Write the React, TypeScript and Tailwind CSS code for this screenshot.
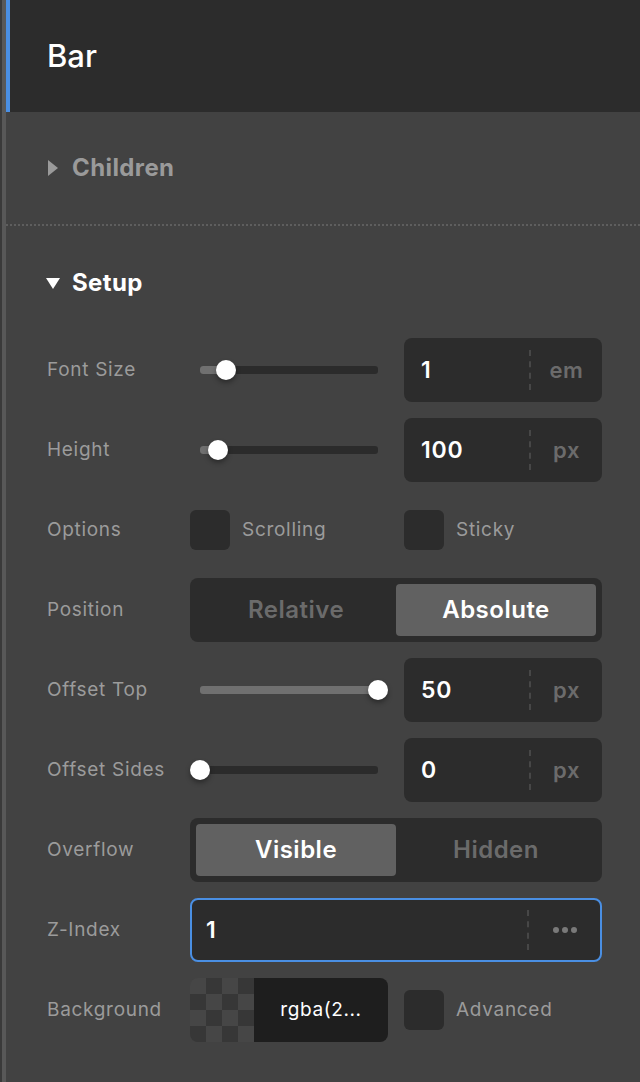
import React from 'react';

const font = { fontFamily: 'Inter, "Noto Sans", sans-serif' };

function Slider({ value }: { value: number }) {
  return (
    <div className="relative h-5 w-[198px]">
      <div className="absolute left-[10px] right-[10px] top-[6px] h-2 overflow-hidden rounded-[3px] bg-[#2b2b2b]">
        <div className="h-full bg-[#707070]" style={{ width: `${value * 100}%` }} />
      </div>
      <div
        className="absolute top-0 h-5 w-5 rounded-full bg-white shadow-[0_3px_5px_rgba(0,0,0,0.35)]"
        style={{ left: `${value * 178}px` }}
      />
    </div>
  );
}

function NumberInput({ value, unit }: { value: string; unit: string }) {
  return (
    <div className="flex h-16 w-[198px] items-center rounded-lg bg-[#2c2c2c]">
      <span className="flex-1 pl-[17px] text-[23px] font-semibold tracking-[0.8px] text-white">{value}</span>
      <div className="h-10 border-l-2 border-dashed border-[#474747]" />
      <span className="w-[71px] text-center text-[22px] font-semibold tracking-[0.5px] text-[#6b6b6b]">{unit}</span>
    </div>
  );
}

function Checkbox({ label }: { label: string }) {
  return (
    <div className="flex items-center gap-3">
      <div className="h-10 w-10 rounded-md bg-[#2c2c2c]" />
      <span className="text-[19px] tracking-[0.7px] text-[#9b9b9b]">{label}</span>
    </div>
  );
}

function Segmented({ options, active }: { options: string[]; active: number }) {
  return (
    <div className="grid h-16 w-[412px] grid-cols-2 rounded-lg bg-[#2c2c2c] p-[6px]">
      {options.map((o, i) => (
        <div
          key={o}
          className={
            i === active
              ? 'flex items-center justify-center rounded bg-[#616161] text-[24px] font-semibold tracking-[0.5px] text-white'
              : 'flex items-center justify-center text-[24px] font-semibold tracking-[0.5px] text-[#6b6b6b]'
          }
        >
          {o}
        </div>
      ))}
    </div>
  );
}

function Row({ label, children }: { label: string; children: React.ReactNode }) {
  return (
    <div className="flex h-20 items-center">
      <span className="w-[143px] text-[19px] tracking-[0.7px] text-[#9b9b9b]">{label}</span>
      <div className="flex items-center gap-4">{children}</div>
    </div>
  );
}

const checker = [0, 1, 2, 3].flatMap((r) => [0, 1, 2, 3].map((c) => (r + c) % 2 === 0));

export default function App() {
  return (
    <div className="flex min-h-[1082px] w-[640px] bg-[#424242]" style={font}>
      <div className="w-[2px] bg-[#3a3a3a]" />
      <div className="w-1 bg-[#585858]" />
      <div className="flex-1">
        <div className="flex h-[112px] items-center border-l-4 border-[#4a8fe3] bg-[#2c2c2c] pl-[37px]">
          <span className="text-[31px] font-medium text-white">Bar</span>
        </div>

        <div className="flex h-[112px] items-center gap-[14px] pl-[42px]">
          <svg width="10" height="16" viewBox="0 0 10 16">
            <path d="M0 0 L10 8 L0 16 Z" fill="#9a9a9a" />
          </svg>
          <span className="text-[24px] font-bold tracking-[0.4px] text-[#9a9a9a]">Children</span>
        </div>
        <div className="border-t-2 border-dotted border-[#5e5e5e]" />

        <div className="mt-[40px] flex h-[34px] items-center gap-[12px] pl-[40px]">
          <svg width="14" height="11" viewBox="0 0 14 11">
            <path d="M0 0 L14 0 L7 11 Z" fill="#ffffff" />
          </svg>
          <span className="text-[24px] font-bold tracking-[0.4px] text-white">Setup</span>
        </div>

        <div className="mt-[30px] pl-[41px]">
          <Row label="Font Size">
            <Slider value={0.144} />
            <NumberInput value="1" unit="em" />
          </Row>
          <Row label="Height">
            <Slider value={0.1} />
            <NumberInput value="100" unit="px" />
          </Row>
          <Row label="Options">
            <div className="grid grid-cols-[198px_198px] gap-4">
              <Checkbox label="Scrolling" />
              <Checkbox label="Sticky" />
            </div>
          </Row>
          <Row label="Position">
            <Segmented options={['Relative', 'Absolute']} active={1} />
          </Row>
          <Row label="Offset Top">
            <Slider value={1} />
            <NumberInput value="50" unit="px" />
          </Row>
          <Row label="Offset Sides">
            <Slider value={0} />
            <NumberInput value="0" unit="px" />
          </Row>
          <Row label="Overflow">
            <Segmented options={['Visible', 'Hidden']} active={0} />
          </Row>
          <Row label="Z-Index">
            <div className="flex h-16 w-[412px] items-center rounded-lg border-2 border-[#4a8fe3] bg-[#2c2c2c]">
              <span className="flex-1 pl-[14px] text-[23px] font-semibold text-white">1</span>
              <div className="h-10 border-l-2 border-dashed border-[#474747]" />
              <div className="flex w-[71px] items-center justify-center gap-[3px]">
                <span className="h-[6px] w-[6px] rounded-full bg-[#7a7a7a]" />
                <span className="h-[6px] w-[6px] rounded-full bg-[#7a7a7a]" />
                <span className="h-[6px] w-[6px] rounded-full bg-[#7a7a7a]" />
              </div>
            </div>
          </Row>
          <Row label="Background">
            <div className="flex h-16 w-[198px] overflow-hidden rounded-lg">
              <div className="grid h-16 w-16 grid-cols-4">
                {checker.map((light, i) => (
                  <div key={i} className={light ? 'bg-[#464646]' : 'bg-[#373737]'} />
                ))}
              </div>
              <div className="flex flex-1 items-center justify-center bg-[#1e1e1e] text-[19px] tracking-[0.6px] text-white">
                rgba(2...
              </div>
            </div>
            <Checkbox label="Advanced" />
          </Row>
        </div>
      </div>
    </div>
  );
}
